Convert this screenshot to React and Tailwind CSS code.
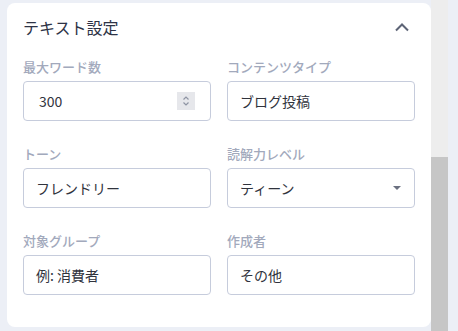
const fields = [
  { label: '最大ワード数', value: '300', kind: 'number' },
  { label: 'コンテンツタイプ', value: 'ブログ投稿' },
  { label: 'トーン', value: 'フレンドリー' },
  { label: '読解力レベル', value: 'ティーン', kind: 'select' },
  { label: '対象グループ', value: '例: 消費者' },
  { label: '作成者', value: 'その他' },
];

const Spinner = () => (
  <div className="w-[18px] h-[18px] bg-[#e6e7eb] flex flex-col items-center justify-center">
    <svg width="10" height="14" viewBox="0 0 10 14" fill="none" stroke="#8e94a3" strokeWidth="1.2">
      <path d="M2.5 5.5 L5 3 L7.5 5.5" />
      <path d="M2.5 8.5 L5 11 L7.5 8.5" />
    </svg>
  </div>
);

const Field = ({ field }) => (
  <div className="flex flex-col gap-[6px]">
    <label className="text-[13px] leading-4 font-medium text-[#a2a9bc]">{field.label}</label>
    <div
      className={
        'h-10 border border-[#c6ccdc] rounded-[4px] bg-white flex items-center text-[14px] text-[#30333d] ' +
        (field.kind === 'number' ? 'pl-[15px] pr-[15px]' : 'pl-3 pr-[13px]')
      }
    >
      <span className="flex-1">{field.value}</span>
      {field.kind === 'number' && <Spinner />}
      {field.kind === 'select' && (
        <svg width="8" height="4" viewBox="0 0 8 4">
          <path d="M0 0 L8 0 L4 4 Z" fill="#6b7080" />
        </svg>
      )}
    </div>
  </div>
);

export default function App() {
  return (
    <div
      className="w-[458px] h-[331px] bg-[#eceff6] flex overflow-hidden"
      style={{ fontFamily: '"Noto Sans CJK JP", "Noto Sans", sans-serif' }}
    >
      <div className="w-[431px] pl-[7px] pt-[3px]">
        <div className="bg-white rounded-lg w-[424px] px-4 pt-3 pb-8">
          <div className="h-6 flex items-center">
            <h2 className="text-[16px] text-[#2e3346]">テキスト設定</h2>
            <svg className="ml-auto mr-[6px]" width="14" height="9" viewBox="0 0 14 9" fill="none" stroke="#5d6476" strokeWidth="2">
              <path d="M1 7.5 L7 1.5 L13 7.5" />
            </svg>
          </div>
          <div className="mt-5 grid grid-cols-2 gap-x-4 gap-y-[25px]">
            {fields.map((f, i) => (
              <Field key={i} field={f} />
            ))}
          </div>
        </div>
      </div>
      <div className="w-[17px] flex flex-col">
        <div className="h-[157px] bg-[#ededed]" />
        <div className="flex-1 bg-[#c6c6c6]" />
      </div>
    </div>
  );
}
